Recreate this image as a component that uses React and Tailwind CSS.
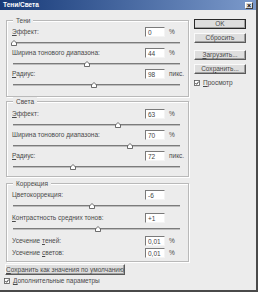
import React from 'react'

const font = "font-['Tahoma','Liberation_Sans','DejaVu_Sans',sans-serif]"

function Key({ children }) {
  return <span className="underline underline-offset-[1px]">{children}</span>
}

function Field({ value }) {
  return (
    <div className="w-[20px] h-[10px] bg-white border-t border-l border-t-[#7a7a7a] border-l-[#7a7a7a] border-b border-r border-b-[#f4f4f4] border-r-[#f4f4f4] pl-[2px] leading-[9px] text-[#444]">
      {value}
    </div>
  )
}

function Slider({ pos }) {
  return (
    <div className="h-[11px] pl-[6px] flex items-center">
      <div className="relative w-[167px] h-[2px] bg-[#7b7b7b] border-b border-b-[#bdbdbd]">
        <svg
          className="absolute top-[-2px]"
          style={{ left: pos - 3 }}
          width="6"
          height="6"
          viewBox="0 0 6 6"
        >
          <path d="M3 0.5 L5.5 3 L5.5 5.5 L0.5 5.5 L0.5 3 Z" fill="#fff" stroke="#4a4a4a" strokeWidth="0.8" />
        </svg>
      </div>
    </div>
  )
}

function Row({ label, value, unit, h = 'h-[10px]' }) {
  return (
    <div className={`${h} flex items-center pl-[5px] pr-[3px]`}>
      <div className="flex-1">{label}</div>
      <Field value={value} />
      <div className="w-[20px] pl-[4px]">{unit}</div>
    </div>
  )
}

function Group({ title, children, className }) {
  return (
    <div className={`relative w-[183px] border border-[#b9b9b9] shadow-[inset_1px_1px_0_#fff,1px_1px_0_#fff] ${className}`}>
      <div className="absolute top-[-5px] left-[6px] px-[3px] bg-[#ececec] leading-[9px]">{title}</div>
      {children}
    </div>
  )
}

function Button({ children, main }) {
  return (
    <div
      className={`h-[10px] w-[52px] flex items-center justify-center bg-[#dedede] border ${
        main ? 'border-[#2a2a2a]' : 'border-t-[#fafafa] border-l-[#fafafa] border-b-[#5a5a5a] border-r-[#5a5a5a]'
      } shadow-[inset_-1px_-1px_0_#a0a0a0] leading-none`}
    >
      {children}
    </div>
  )
}

function Check({ label }) {
  return (
    <div className="h-[10px] flex items-center gap-[3px]">
      <svg width="6" height="6" viewBox="0 0 6 6">
        <rect x="0.5" y="0.5" width="5" height="5" fill="#fff" stroke="#555" strokeWidth="0.8" />
        <path d="M1.4 3 L2.6 4.3 L4.7 1.6" fill="none" stroke="#222" strokeWidth="0.9" />
      </svg>
      <span>{label}</span>
    </div>
  )
}

// track starts at x=13, thumbs given as offset along the 167px track
const shadows = [
  { label: <><Key>Э</Key>ффект:</>, value: '0', unit: '%', pos: 1 },
  { label: 'Ширина тонового диапазона:', value: '44', unit: '%', pos: 74 },
  { label: <><Key>Р</Key>адиус:</>, value: '98', unit: 'пикс.', pos: 81 },
]

const lights = [
  { label: <><Key>Э</Key>ффект:</>, value: '63', unit: '%', pos: 105 },
  { label: 'Ширина тонового диапазона:', value: '70', unit: '%', pos: 117 },
  { label: <><Key>Р</Key>адиус:</>, value: '72', unit: 'пикс.', pos: 60 },
]

export default function App() {
  return (
    <div className={`w-[258px] h-[292px] bg-[#ececec] border-r-2 border-b-2 border-r-[#4a4a4a] border-b-[#4a4a4a] flex flex-col text-[6.5px] text-[#4a4a4a] ${font}`}>
      <div className="h-[10px] shrink-0 flex items-center justify-between pl-[3px] pr-[3px] bg-gradient-to-r from-[#173a78] to-[#7c9acb]">
        <span className="text-white font-bold text-[6.5px] leading-none">Тени/Света</span>
        <div className="w-[8px] h-[7px] bg-[#dcdcdc] border border-t-white border-l-white border-b-[#404040] border-r-[#404040] flex items-center justify-center text-[7px] leading-none font-bold text-black">
          ×
        </div>
      </div>

      <div className="flex flex-1">
        <div className="w-[194px] pl-[6px] pt-[10px] flex flex-col">
          <Group title="Тени" className="h-[77px] pt-[6px]">
            {shadows.map((r, i) => (
              <div key={i}>
                <Row label={r.label} value={r.value} unit={r.unit} />
                <Slider pos={r.pos} />
              </div>
            ))}
          </Group>

          <Group title="Света" className="h-[76px] pt-[7px] mt-[4px]">
            {lights.map((r, i) => (
              <div key={i}>
                <Row label={r.label} value={r.value} unit={r.unit} />
                <Slider pos={r.pos} />
              </div>
            ))}
          </Group>

          <Group title="Коррекция" className="h-[79px] pt-[6px] mt-[6px]">
            <Row label="Цветокоррекция:" value="-6" unit="" />
            <Slider pos={79} />
            <div className="h-[2px]" />
            <Row label={<><Key>К</Key>онтрастность средних тонов:</>} value="+1" unit="" />
            <Slider pos={85} />
            <div className="h-[1px]" />
            <Row label={<>Усечение <Key>т</Key>еней:</>} value="0,01" unit="%" h="h-[12px]" />
            <Row label={<>Усечение <Key>с</Key>ветов:</>} value="0,01" unit="%" h="h-[12px]" />
          </Group>

          <div className="mt-[2px] w-[120px] ml-[-1px] h-[11px] flex items-center justify-center bg-[#dedede] border border-t-[#fafafa] border-l-[#fafafa] border-b-[#5a5a5a] border-r-[#5a5a5a] shadow-[inset_-1px_-1px_0_#a0a0a0]">
            <span><Key>С</Key>охранить как значения по умолчанию</span>
          </div>
          <div className="mt-[1px] ml-[-2px]">
            <Check label={<><Key>Д</Key>ополнительные параметры</>} />
          </div>
        </div>

        <div className="pt-[9px] flex flex-col">
          <Button main>OK</Button>
          <div className="h-[4px]" />
          <Button>Сбросить</Button>
          <div className="h-[7px]" />
          <Button><span><Key>З</Key>агрузить...</span></Button>
          <div className="h-[4px]" />
          <Button><span>Сох<Key>р</Key>анить...</span></Button>
          <div className="h-[4px]" />
          <Check label={<><Key>П</Key>росмотр</>} />
        </div>
      </div>
    </div>
  )
}
